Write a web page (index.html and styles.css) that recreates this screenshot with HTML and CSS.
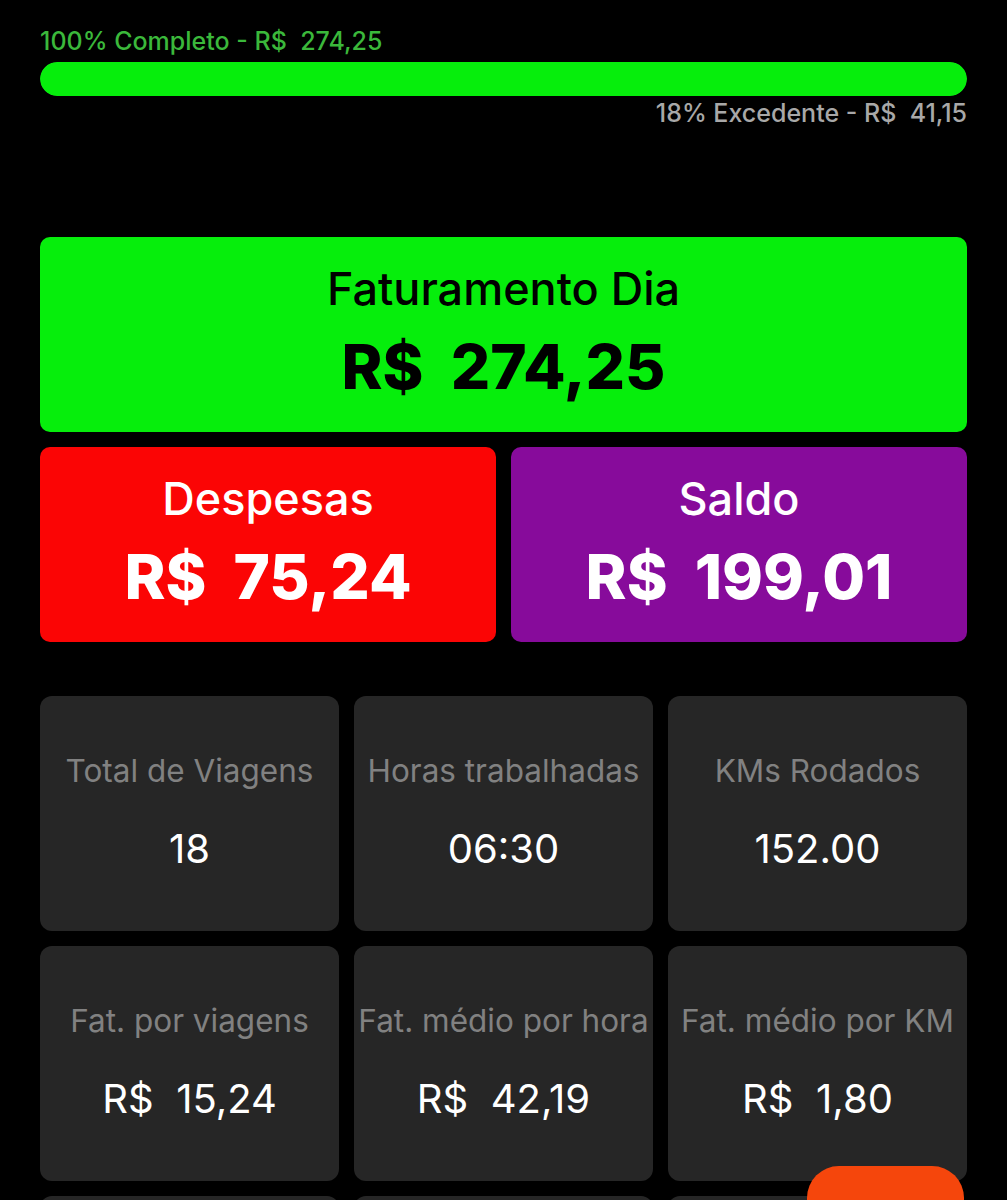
FILE: index.html
```html
<!DOCTYPE html>
<html lang="pt-BR">
<head>
    <meta charset="UTF-8">
    <meta name="viewport" content="width=device-width, initial-scale=1.0">
    <title>Resumo do Dia</title>
    <link rel="stylesheet" href="styles.css">
</head>
<body>
    <div class="page">
        <!-- Meta do dia -->
        <div class="goal">
            <div class="goal-label">100% Completo - R$&nbsp; 274,25</div>
            <div class="goal-bar"><div class="goal-fill" style="width: 100%"></div></div>
            <div class="goal-extra">18% Excedente - R$&nbsp; 41,15</div>
        </div>

        <!-- Faturamento -->
        <div class="summary summary-green">
            <div class="summary-title">Faturamento Dia</div>
            <div class="summary-value">R$&nbsp; 274,25</div>
        </div>

        <div class="summary-row">
            <div class="summary summary-red">
                <div class="summary-title">Despesas</div>
                <div class="summary-value">R$&nbsp; 75,24</div>
            </div>
            <div class="summary summary-purple">
                <div class="summary-title">Saldo</div>
                <div class="summary-value">R$&nbsp; 199,01</div>
            </div>
        </div>

        <!-- Estatisticas -->
        <div class="stats">
            <div class="stat">
                <div class="stat-label">Total de Viagens</div>
                <div class="stat-value">18</div>
            </div>
            <div class="stat">
                <div class="stat-label">Horas trabalhadas</div>
                <div class="stat-value">06:30</div>
            </div>
            <div class="stat">
                <div class="stat-label">KMs Rodados</div>
                <div class="stat-value">152.00</div>
            </div>
            <div class="stat">
                <div class="stat-label">Fat. por viagens</div>
                <div class="stat-value">R$&nbsp; 15,24</div>
            </div>
            <div class="stat">
                <div class="stat-label">Fat. médio por hora</div>
                <div class="stat-value">R$&nbsp; 42,19</div>
            </div>
            <div class="stat">
                <div class="stat-label">Fat. médio por KM</div>
                <div class="stat-value">R$&nbsp; 1,80</div>
            </div>
            <div class="stat">
                <div class="stat-label">Combustível</div>
                <div class="stat-value">R$&nbsp; 60,00</div>
            </div>
            <div class="stat">
                <div class="stat-label">Alimentação</div>
                <div class="stat-value">R$&nbsp; 15,24</div>
            </div>
            <div class="stat">
                <div class="stat-label">Outros</div>
                <div class="stat-value">R$&nbsp; 0,00</div>
            </div>
        </div>
    </div>

    <!-- Botao flutuante -->
    <button class="fab"></button>
</body>
</html>
```

FILE: styles.css
```css
/* Base */
body {
    margin: 0;
    background-color: #000;
    font-family: Inter, "Noto Sans", Arial, sans-serif;
    color: #fff;
}
.page {
    padding: 26px 40px 40px;
}

/* Meta do dia */
.goal-label {
    color: #3bb83b;
    font-size: 25px;
    font-weight: 500;
    line-height: 30px;
    margin-bottom: 6px;
}
.goal-bar {
    height: 34px;
    border-radius: 17px;
    background-color: #1a1a1a;
    overflow: hidden;
}
.goal-fill {
    height: 100%;
    background-color: #06ee0c;
    border-radius: 17px;
}
.goal-extra {
    color: #a8a8a8;
    font-size: 25px;
    font-weight: 500;
    line-height: 30px;
    margin-top: 2px;
    text-align: right;
}

/* Cards de resumo */
.summary {
    height: 195px;
    border-radius: 10px;
    display: flex;
    flex-direction: column;
    align-items: center;
    justify-content: center;
    gap: 15px;
    padding-bottom: 2px;
    box-sizing: border-box;
}
.summary-green {
    margin-top: 109px;
    background-color: #06ee0c;
    color: #000;
}
.summary-red { background-color: #fb0505; }
.summary-purple { background-color: #870b9b; }
.summary-row {
    display: grid;
    grid-template-columns: 1fr 1fr;
    gap: 15px;
    margin-top: 15px;
}
.summary-title {
    font-size: 45px;
    font-weight: 500;
    line-height: 52px;
}
.summary-value {
    font-size: 62px;
    font-weight: 800;
    line-height: 74px;
}

/* Estatisticas */
.stats {
    display: grid;
    grid-template-columns: repeat(3, 1fr);
    gap: 15px;
    margin-top: 54px;
}
.stat {
    height: 235px;
    background-color: #262626;
    border-radius: 12px;
    display: flex;
    flex-direction: column;
    align-items: center;
    justify-content: center;
    gap: 34px;
    padding-bottom: 3px;
    box-sizing: border-box;
}
.stat-label {
    color: #818181;
    font-size: 31.5px;
    line-height: 40px;
    white-space: nowrap;
}
.stat-value {
    font-size: 40px;
    line-height: 48px;
}

/* Botao flutuante */
.fab {
    position: fixed;
    right: 43px;
    bottom: -36px;
    width: 157px;
    height: 70px;
    border: none;
    border-radius: 32px;
    background-color: #f5460c;
    cursor: pointer;
}
```
